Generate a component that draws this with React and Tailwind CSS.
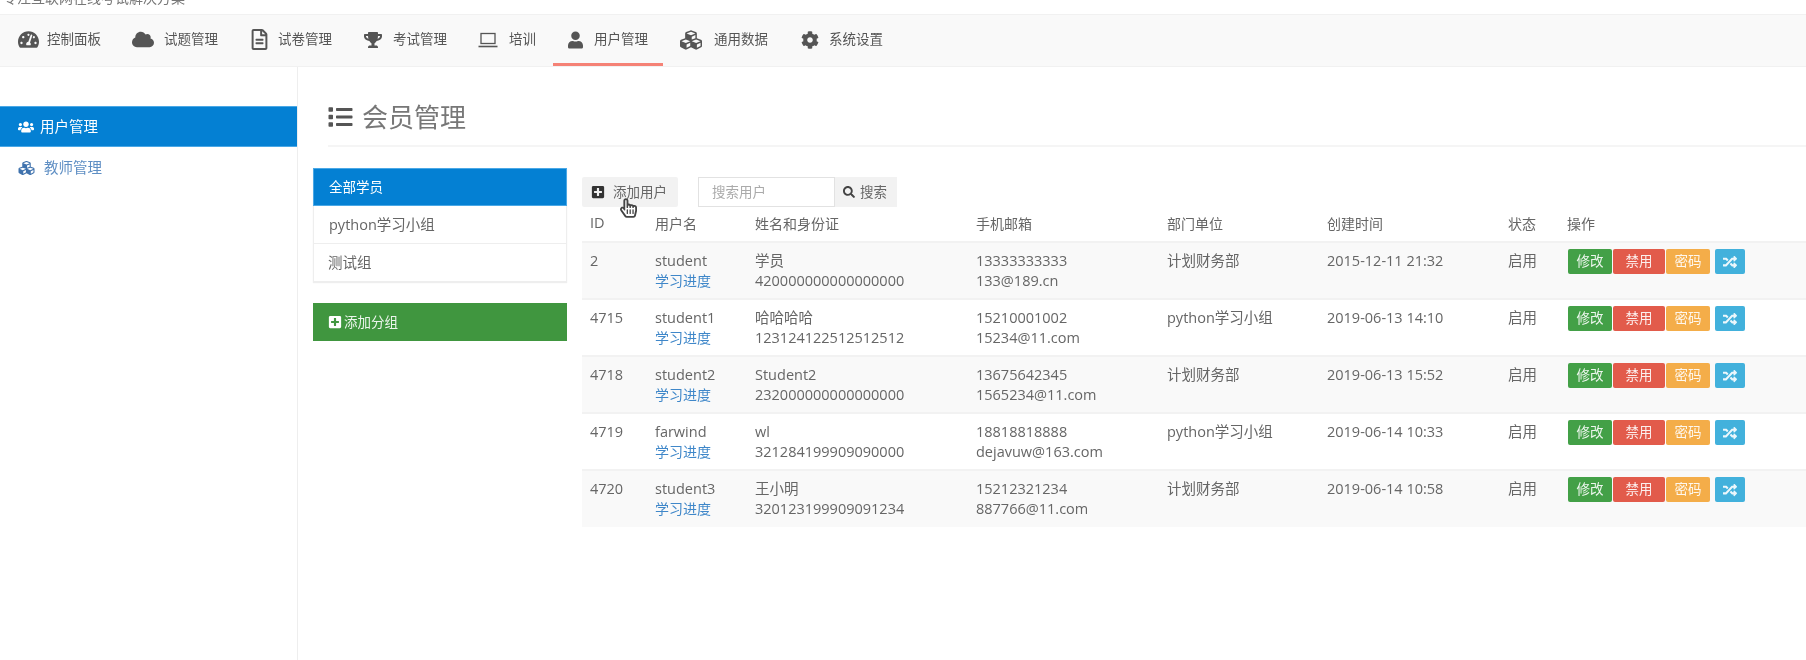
import {
  FaTachometerAlt, FaCloud, FaRegFileAlt, FaTrophy, FaUser, FaCubes, FaCog,
  FaUsers, FaList, FaPlusSquare, FaSearch, FaRandom, FaRegHandPointer,
} from 'react-icons/fa'

function LaptopIcon({ className }) {
  return (
    <svg className={className} viewBox="0 0 20 16" fill="none" stroke="currentColor" strokeWidth="1.3">
      <rect x="3" y="1.5" width="14" height="10" />
      <path d="M0.5 14.5h19" strokeWidth="1.6" />
    </svg>
  )
}

const nav = [
  { label: '控制面板', icon: FaTachometerAlt, size: 'w-[21px] h-[21px]', w: 'w-[115px]', gap: 'gap-[8px]' },
  { label: '试题管理', icon: FaCloud, size: 'w-[23px] h-[23px]', w: 'w-[116px]', gap: 'gap-[10px]' },
  { label: '试卷管理', icon: FaRegFileAlt, size: 'w-[19px] h-[21px]', w: 'w-[114px]', gap: 'gap-[8px]' },
  { label: '考试管理', icon: FaTrophy, size: 'w-[18px] h-[18px]', w: 'w-[115px]', gap: 'gap-[9px]' },
  { label: '培训', icon: LaptopIcon, size: 'w-[20px] h-[16px]', w: 'w-[76px]', gap: 'gap-[10px]' },
  { label: '用户管理', icon: FaUser, size: 'w-[15px] h-[18px]', w: 'w-[127px]', gap: 'gap-[8px]', active: true },
  { label: '通用数据', icon: FaCubes, size: 'w-[26px] h-[24px]', w: 'w-[119px]', gap: 'gap-[12px]' },
  { label: '系统设置', icon: FaCog, size: 'w-[18px] h-[18px]', w: 'w-[110px]', gap: 'gap-[8px]' },
]

const users = [
  { id: 2, user: 'student', name: '学员', card: '420000000000000000', phone: '13333333333', mail: '133@189.cn', dept: '计划财务部', time: '2015-12-11 21:32' },
  { id: 4715, user: 'student1', name: '哈哈哈哈', card: '123124122512512512', phone: '15210001002', mail: '15234@11.com', dept: 'python学习小组', time: '2019-06-13 14:10' },
  { id: 4718, user: 'student2', name: 'Student2', card: '232000000000000000', phone: '13675642345', mail: '1565234@11.com', dept: '计划财务部', time: '2019-06-13 15:52' },
  { id: 4719, user: 'farwind', name: 'wl', card: '321284199909090000', phone: '18818818888', mail: 'dejavuw@163.com', dept: 'python学习小组', time: '2019-06-14 10:33' },
  { id: 4720, user: 'student3', name: '王小明', card: '320123199909091234', phone: '15212321234', mail: '887766@11.com', dept: '计划财务部', time: '2019-06-14 10:58' },
]

function Actions() {
  return (
    <div className="flex text-[13.5px] text-white/90 leading-[25px]">
      <span className="w-[44px] h-[25px] text-center bg-[#43a047] rounded-[2px]">修改</span>
      <span className="w-[52px] h-[25px] ml-px text-center bg-[#e25b4b] rounded-[2px]">禁用</span>
      <span className="w-[44px] h-[25px] ml-px text-center bg-[#f4ad49] rounded-[2px]">密码</span>
      <span className="w-[30px] h-[25px] ml-[5px] flex items-center justify-center bg-[#42b1dc] rounded-[2px]">
        <FaRandom className="w-[14px] h-[14px]" />
      </span>
    </div>
  )
}

export default function App() {
  return (
    <div className="h-[660px] overflow-hidden bg-white text-[#666] text-[14.5px] blur-[0.5px] font-['Open_Sans','Noto_Sans_CJK_SC',sans-serif]">
      <div className="h-[14px] overflow-hidden">
        <p className="text-[14px] leading-[14px] pl-[3px] -mt-[9px] pt-0 text-[#777]">专注互联网在线考试解决方案</p>
      </div>

      <nav className="h-[53px] bg-[#f9f9f9] border-y border-[#f1f1f1] flex pl-[17px] text-[13.5px] text-[#555]">
        {nav.map((item) => {
          const Icon = item.icon
          return (
            <div key={item.label}
              className={`${item.w} ${item.gap} relative flex items-center pb-[2px] ${item.active ? 'pl-[11px]' : ''}`}>
              <span className="w-[22px] flex justify-center shrink-0">
                <Icon className={`${item.size} text-[#555]`} />
              </span>
              <span>{item.label}</span>
              {item.active && <span className="absolute left-0 w-[110px] bottom-0 h-[3px] bg-[#f58276]" />}
            </div>
          )
        })}
      </nav>

      <div className="flex h-[593px]">
        <aside className="w-[298px] shrink-0 border-r border-[#eeeeee] pt-[39px]">
          <div className="h-[41px] bg-[#0480d3] border-y border-[#4aa8e6] text-white text-[14.5px] flex items-center pl-[18px] gap-[6px]">
            <FaUsers className="w-[16px] h-[18px]" />
            <span>用户管理</span>
          </div>
          <div className="h-[41px] text-[#5f8fc4] text-[14.5px] flex items-center pl-[18px] gap-[9px]">
            <FaCubes className="w-[17px] h-[16px] text-[#3f72ad]" />
            <span>教师管理</span>
          </div>
        </aside>

        <main className="flex-1 min-w-0 pl-[15px]">
          <div className="ml-[15px] h-[80px] pt-[33px] border-b-2 border-[#f5f5f5] flex items-start">
            <FaList className="w-[25px] h-[24px] mt-[5px] mr-[9px] text-[#555]" />
            <h1 className="text-[26px] leading-[34px] font-normal text-[#777]">会员管理</h1>
          </div>

          <div className="flex mt-[21px]">
            <div className="w-[254px] shrink-0">
              <div className="border border-[#eeeeee] shadow-[0_1px_1px_#eee]">
                <div className="h-[38px] -m-px mb-0 bg-[#0480d3] border border-[#4aa8e6] text-white text-[13.5px] flex items-center pl-[15px]">全部学员</div>
                <div className="h-[38px] border-b border-[#eeeeee] flex items-center pl-[15px]">python学习小组</div>
                <div className="h-[37px] flex items-center pl-[14px]">测试组</div>
              </div>
              <div className="h-[38px] mt-[21px] bg-[#40963f] text-white/90 text-[13.5px] flex items-center pl-[15px] gap-[2px]">
                <FaPlusSquare className="w-[14px] h-[14px] text-white" />
                <span>添加分组</span>
              </div>
            </div>

            <div className="flex-1 min-w-0 ml-[15px]">
              <div className="flex mt-[9px] h-[30px] text-[13.5px]">
                <div className="relative w-[96px] bg-[#f2f2f2] rounded-[2px] flex items-center pl-[9px] gap-[8px]">
                  <FaPlusSquare className="w-[14px] h-[14px] text-[#333]" />
                  <span>添加用户</span>
                  <FaRegHandPointer className="absolute left-[38px] top-[20px] w-[17px] h-[22px] text-[#444]" />
                </div>
                <div className="w-[137px] ml-[20px] border border-[#e2e2e2] flex items-center pl-[13px] text-[#aaa]">搜索用户</div>
                <div className="w-[62px] bg-[#f2f2f2] flex items-center pl-[8px] gap-[5px]">
                  <FaSearch className="w-[12px] h-[12px] text-[#444]" />
                  <span>搜索</span>
                </div>
              </div>

              <table className="w-full table-fixed border-collapse mt-[1px] text-left">
                <thead>
                  <tr className="h-[34px] text-[14px]">
                    <th className="w-[73px] pl-[8px] pb-[3px] font-normal text-[14.5px]">ID</th>
                    <th className="w-[100px] pb-[3px] font-normal">用户名</th>
                    <th className="w-[221px] pb-[3px] font-normal">姓名和身份证</th>
                    <th className="w-[191px] pb-[3px] font-normal">手机邮箱</th>
                    <th className="w-[160px] pb-[3px] font-normal">部门单位</th>
                    <th className="w-[181px] pb-[3px] font-normal">创建时间</th>
                    <th className="w-[59px] pb-[3px] font-normal">状态</th>
                    <th className="pb-[3px] font-normal">操作</th>
                  </tr>
                </thead>
                <tbody>
                  {users.map((u, i) => (
                    <tr key={u.id} className={`h-[57px] border-t-2 border-[#f2f2f2] align-top leading-[20px] ${i % 2 === 0 ? 'bg-[#f9f9f9]' : 'bg-white'}`}>
                      <td className="pl-[8px] pt-[8px]">{u.id}</td>
                      <td className="pt-[8px]">
                        {u.user}
                        <div className="text-[#3f87c9] text-[14px]">学习进度</div>
                      </td>
                      <td className="pt-[8px]">{u.name}<div>{u.card}</div></td>
                      <td className="pt-[8px]">{u.phone}<div>{u.mail}</div></td>
                      <td className="pt-[8px]">{u.dept}</td>
                      <td className="pt-[8px]">{u.time}</td>
                      <td className="pt-[8px]">启用</td>
                      <td className="pt-[6px]"><div className="ml-px"><Actions /></div></td>
                    </tr>
                  ))}
                </tbody>
              </table>
            </div>
          </div>
        </main>
      </div>
    </div>
  )
}
